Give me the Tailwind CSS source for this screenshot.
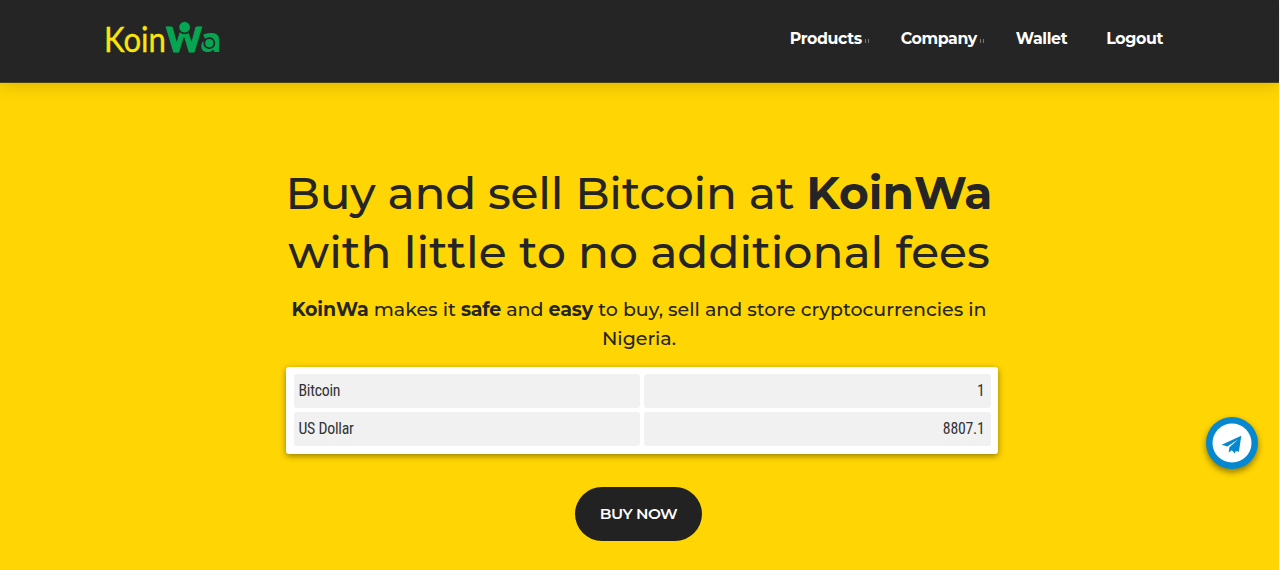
<!DOCTYPE html>
<html lang="en">
<head>
<meta charset="utf-8">
<title>KoinWa</title>
<script src="https://cdn.jsdelivr.net/npm/@tailwindcss/browser@4"></script>
</head>
<body class="bg-white font-['Montserrat',sans-serif] text-[#252525] antialiased overflow-hidden">
<div class="w-[1279px] h-[570px] bg-[#ffd503] flex flex-col">
  <header class="relative h-[83px] shrink-0 bg-[#252525] border-b border-[#4b4218] shadow-[0_2px_16px_rgba(0,0,0,0.15)] flex items-start justify-between pl-[106px] pr-[116px]">
    <svg class="mt-[18px] w-[116px] h-[38px] overflow-visible" viewBox="0 0 116 38" aria-label="KoinWa">
      <text x="-2" y="34" font-family="Lato" font-size="34" font-weight="400" fill="#fbe50a" stroke="#fbe50a" stroke-width=".3" textLength="62" lengthAdjust="spacingAndGlyphs">Koin</text>
      <text x="60.3" y="34" font-family="Lato" font-size="34" font-weight="900" fill="#05a551" stroke="#05a551" stroke-width="1.2" textLength="35.5" lengthAdjust="spacingAndGlyphs">W</text>
      <text x="94.2" y="34" font-family="Open Sans" font-size="33" font-weight="800" fill="#05a551" textLength="21" lengthAdjust="spacingAndGlyphs">a</text>
      <circle cx="78.6" cy="9.2" r="6.2" fill="#05a551" stroke="#252525" stroke-width="1.6"/>
      <circle cx="103.3" cy="25.2" r="5" fill="#05a551" stroke="#252525" stroke-width="1.8"/>
    </svg>
    <nav class="mt-[29px] flex text-[15.8px] tracking-[-0.37px] leading-5 font-bold text-white">
      <a class="w-[111px] flex items-center">Products<span class="ml-[3px] mt-[3px] w-1 h-1 border-x border-[#777]"></span></a>
      <a class="w-[115px] flex items-center">Company<span class="ml-[3px] mt-[3px] w-1 h-1 border-x border-[#777]"></span></a>
      <a class="w-[90.5px]">Wallet</a>
      <a>Logout</a>
    </nav>
  </header>
  <main class="flex flex-col items-center pt-[81px]">
    <h1 class="mr-[1px] text-[45.5px] leading-[58.5px] font-medium text-center whitespace-nowrap">
      <span class="block"><span class="tracking-[-0.23px]">Buy and sell Bitcoin at </span><b class="font-bold">KoinWa</b></span>
      <span class="block">with little to no additional fees</span>
    </h1>
    <p class="mt-[15px] mr-[1px] text-[19px] leading-[28.5px] font-medium text-center whitespace-nowrap"><b class="tracking-[-0.1px]">KoinWa</b> makes it <b class="tracking-[-0.2px]">safe</b> and <b class="tracking-[-0.1px]">easy</b> to buy, sell and store cryptocurrencies in<br>Nigeria.</p>
    <div class="mt-[14px] ml-[5px] w-[712px] h-[87px] rounded-[3px] bg-white px-[7.5px] pt-[7px] shadow-[0_2px_6px_rgba(0,0,0,0.42)] grid grid-cols-2 grid-rows-[34px_34px] gap-1 font-['Roboto_Condensed'] text-[15.8px] tracking-[-0.25px] leading-[33px] text-[#333] [&>div]:bg-[#f1f1f1] [&>div]:rounded-[3px] [&>div]:pl-[5px] [&>div]:pr-[6px]">
      <div>Bitcoin</div><div class="text-right">1</div>
      <div>US Dollar</div><div class="text-right">8807.1</div>
    </div>
    <button class="mt-[33px] mr-[2px] w-[127px] h-[54px] rounded-full bg-[#222] text-white text-[15.4px] tracking-[-0.5px] font-semibold">BUY NOW</button>
  </main>
</div>
<a class="fixed left-[1206px] top-[417px] w-[52px] h-[52px] rounded-full bg-[#0688d0] shadow-[0_3px_6px_rgba(0,0,0,0.45)] flex items-center justify-center">
  <svg class="w-[40px] h-[40px]" viewBox="0 0 40 40"><circle cx="20" cy="20" r="19.5" fill="#fff"/><path d="M29.3 12.8 9.6 21.8l5.8 1.6L26 16.4l-8.6 7.8-.7 5.3 3.1-2.2 3 3.3 1-2.6 3.1.7z" fill="#0688d0"/></svg>
</a>
</body>
</html>
